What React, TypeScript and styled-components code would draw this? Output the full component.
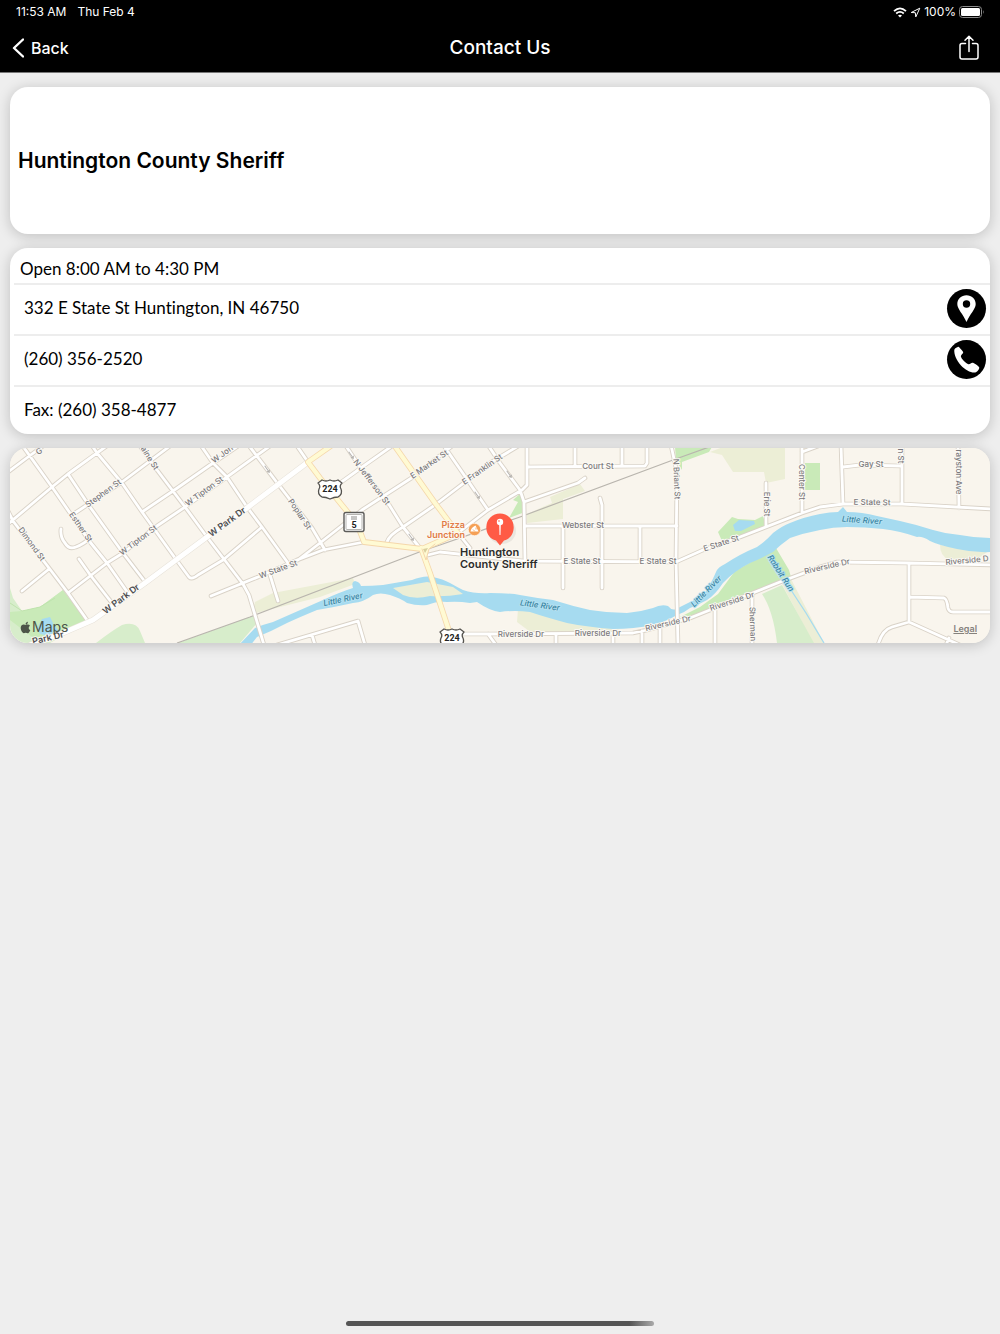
import React from "react";
import styled, { createGlobalStyle } from "styled-components";
import { FaApple } from "react-icons/fa";

const GlobalStyle = createGlobalStyle`
  * { box-sizing: border-box; }
  body {
    margin: 0;
    background: #eeeeee;
    color: #000;
    font-family: Inter, "Liberation Sans", sans-serif;
  }
`;

const Screen = styled.div`
  display: flex;
  flex-direction: column;
  min-height: 100vh;
`;

const Header = styled.header`
  background: #000;
  color: #fff;
  border-bottom: 1px solid #777;
`;

const StatusBar = styled.div`
  display: flex;
  align-items: center;
  height: 24px;
  padding: 0 15px 0 16px;
  font-size: 12px;
  font-weight: 400;
  line-height: 16px;
`;

const StatusDate = styled.span`
  margin-left: 11px;
`;

const StatusIcons = styled.div`
  display: flex;
  align-items: center;
  gap: 3px;
  margin-left: auto;
`;

const NavBar = styled.nav`
  display: grid;
  grid-template-columns: 1fr auto 1fr;
  align-items: center;
  height: 48px;
  padding: 0 12px;
`;

const BarButton = styled.button<{ $end?: boolean }>`
  display: flex;
  align-items: center;
  gap: 7px;
  justify-self: ${(p) => (p.$end ? "end" : "start")};
  padding: ${(p) => (p.$end ? "0 8px" : "0")};
  border: 0;
  background: none;
  color: inherit;
  font: 500 16px/24px Inter, sans-serif;
  cursor: pointer;
`;

const Title = styled.h1`
  margin: 0;
  font-size: 19px;
  font-weight: 500;
  line-height: 24px;
`;

const Content = styled.main`
  display: flex;
  flex-direction: column;
  gap: 14px;
  padding: 14px 10px;
`;

const Card = styled.section`
  position: relative;
  overflow: hidden;
  border-radius: 18px;
  background: #fff;
  box-shadow: 0 2px 14px rgba(0, 0, 0, 0.2);
`;

const NameCard = styled(Card)`
  display: flex;
  align-items: center;
  min-height: 147px;
  padding: 8px;
`;

const Name = styled.h2`
  margin: 0;
  font-size: 21px;
  font-weight: 600;
  line-height: 28px;
`;

const Details = styled(Card)`
  padding-left: 4px;
  font-family: Lato, "Open Sans", sans-serif;
  font-size: 17px;
  font-variant-ligatures: none;
  line-height: 24px;
`;

const Hours = styled.div`
  padding: 9px 6px 2px;
  border-bottom: 2px solid #ededed;
`;

const Row = styled.div`
  display: flex;
  align-items: center;
  justify-content: space-between;
  min-height: 51px;
  padding: 0 4px 3px 10px;
  border-bottom: 2px solid #ededed;

  &:last-child {
    min-height: 47px;
    padding-bottom: 2px;
    border-bottom: 0;
  }
`;

const RoundButton = styled.button`
  display: flex;
  padding: 0;
  border: 0;
  border-radius: 50%;
  background: #000;
  cursor: pointer;
`;

const MapCard = styled(Card)`
  height: 195px;
  background: #f9f5ed;
`;

const MapDrawing = styled.svg`
  display: block;
  width: 100%;
  height: 100%;
  font-family: Inter, sans-serif;
`;

const MapsBrand = styled.div`
  position: absolute;
  left: 9px;
  bottom: 6px;
  display: flex;
  align-items: center;
  color: #4c5548;
  font-size: 14px;
  line-height: 20px;
`;

const LegalLink = styled.a`
  position: absolute;
  right: 13px;
  bottom: 8px;
  color: #85827d;
  font-size: 9px;
  font-weight: 600;
  line-height: 12px;
  text-decoration: underline;
`;

const HomeIndicator = styled.div`
  align-self: center;
  width: 308px;
  height: 5px;
  margin: auto 0 8px;
  border-radius: 3px;
  background: linear-gradient(90deg, #555 92%, #aaa);
`;

const parks = [
  { fill: "#d7edcb", d: "M10 588 13 598 22 611 40 607 63 590 87 622 50 643H10Z" },
  { fill: "#c9eab8", d: "M22 611 40 607 63 590 87 622 60 635 40 643 10 620V612Z" },
  { fill: "#d7edcb", d: "M96 643Q113 630 122 625 136 621 140 631L145 643Z" },
  { fill: "#d7edcb", d: "M178 643 255 615 258 622 240 643Z" },
  { fill: "#eceed6", d: "M255 602 273 593 353 578 355 584 320 597 252 614Z" },
  { fill: "#c9eab8", d: "M509 518 518 502 513 500 522 492 525 512Z" },
  { fill: "#eceed6", d: "M550 497 580 484 585 491 563 499V519L527 523V514L552 503Z" },
  { fill: "#eceed6", d: "M518 609 560 618 620 630 600 634H533L517 622Z" },
  { fill: "#c9eab8", d: "M675 447H712L709 452 682 462V470L676 460Z" },
  { fill: "#eceed6", d: "M710 452 723 447H785V479L766 483 764 472H733L722 455Z" },
  { fill: "#c9eab8", d: "M805 463H820V490H805Z" },
  { fill: "#c9eab8", d: "M718 532 732 517 738 519 755 520 763 516 766 527 722 541Z" },
  { fill: "#c9eab8", d: "M680 617 700 607 718 594 735 571 776 548 789 570 791 577 745 599 690 618Z" },
  { fill: "#eceed6", d: "M782 584 791 579 824 643H813Z" },
  { fill: "#d7edcb", d: "M762 594 782 585 814 643H777Q773 610 762 594Z" },
  { fill: "#eceed6", d: "M940 545 990 550 976 560H949Q940 556 940 545Z" },
];

const river =
  "M238 646 255 628Q265 624 273 622L323 600Q340 592 353 588 351 582 355 581 360 582 361 586 372 586 383 585L412 580Q424 575 433 577 443 579 450 583 457 587 463 590 475 594 490 593 510 593 520 595 536 598 553 600 572 606 590 610 608 613 627 613 640 612 653 608 661 604 668 606 672 611 676 609L690 602Q698 599 704 594 710 586 716 572 718 567 725 564 740 554 757 547 766 541 773 533 782 526 790 523 804 517 820 514 830 512 838 512L843 507 847 512Q862 512 877 516L900 521Q918 525 933 530 946 534 960 535 975 538 992 538V552Q975 553 957 549 938 545 930 541 922 536 917 537 900 531 883 529 865 527 847 527 833 527 820 530 804 533 790 538 780 545 773 552 760 559 750 563 734 571 723 583 715 595 707 600 698 605 690 608 684 613 677 615 665 622 653 625 634 629 613 629 588 627 567 623 545 617 530 612 515 610 500 612 490 611 477 602L470 603Q458 601 447 602 437 601 427 605 417 606 407 603 400 598 390 595 380 592 373 595 364 602 353 603 335 607 317 610 300 617 287 623 272 631 257 637L250 646Z";

const minorRoads = [
  "M8 472 28 457 50 441",
  "M8 524 52 487 68 474 97 453 115 440",
  "M22 445 52 487 90 542 107 563 128 593",
  "M68 474 90 507 123 553 146 583",
  "M91 444 97 453 122 483 142 512 175 558 189 577Q192 580 198 575L223 560 262 527",
  "M75 513 122 482 170 446",
  "M140 446 157 470 185 507 207 537 243 584 249 595 264 645",
  "M142 512 173 491 213 463 247 440",
  "M68 593 107 563 123 553 154 528 185 507 227 477 270 446",
  "M202 447 213 463 227 477 247 507 262 527 288 563",
  "M8 511 13 521 49 568 68 593 87 620",
  "M22 591 49 569",
  "M61 529Q60 537 65 543 69 550 76 547 84 544 90 538",
  "M79 559 91 576 112 603",
  "M211 596 258 577 297 560 323 550 364 542",
  "M250 447 278 484 312 528 325 550",
  "M297 446 308 462",
  "M298 560 320 543 362 510 413 477 452 446",
  "M340 483 365 465 392 446",
  "M346 446 360 467 388 503 403 527 420 548",
  "M387 542Q389 535 403 527L435 505 490 463 520 445",
  "M444 446 462 472 488 510",
  "M458 533 488 510 522 490 527 485V445",
  "M458 533 470 548",
  "M428 555 440 552 523 561 676 562 703 550 740 537 802 513 820 507 843 504 902 504 992 509",
  "M488 445 500 463 520 490 524 502 525 561",
  "M524 502 578 483 585 478",
  "M527 467 645 466 647 463V445",
  "M575 445V466",
  "M622 445V466",
  "M525 526H677",
  "M563 526V588",
  "M600 498 602 505V588",
  "M640 526V561",
  "M671 445 677 473 676 560 678 645",
  "M460 634H490L633 633 647 630 690 618 740 598 780 582 820 567 837 562 909 563 992 565",
  "M488 634 496 645",
  "M556 634V645",
  "M613 634V645",
  "M642 631V645",
  "M660 628V645",
  "M715 609V645",
  "M752 595V645",
  "M766 483V527",
  "M802 445V513",
  "M802 452 818 446",
  "M841 445 843 504",
  "M843 467 860 465 902 466",
  "M902 445V504",
  "M958 445 959 508",
  "M909 563V622L892 627Q882 630 878 645",
  "M909 622 960 645",
  "M946 645 949 638",
  "M909 597 944 598Q947 599 948 608 949 612 953 612H992",
  "M270 575 278 601",
  "M277 645 358 621 365 645",
  "M312 635 315 645",
];

const highways = [
  "M335 443 308 462 320 478 350 515 358 526 364 542 422 549 458 533",
  "M394 445 435 503 453 527 458 533",
  "M421 548 430 573 452 640",
];

type LabelSpec = [string, number, number, number?];

const streetLabels: LabelSpec[] = [
  ["Stephen St", 103, 493, -36],
  ["Esther St", 81, 527, 55],
  ["Dimond St", 32, 544, 54],
  ["W Tipton St", 138, 540, -37],
  ["W Tipton St", 204, 491, -36],
  ["aine St", 150, 458, 58],
  ["W Jon", 222, 454, -36],
  ["G", 39, 451, -36],
  ["W State St", 278, 569, -20],
  ["Poplar St", 300, 514, 56],
  ["N Jefferson St", 372, 482, 53],
  ["E Market St", 429, 464, -35],
  ["E Franklin St", 482, 469, -35],
  ["Court St", 598, 466],
  ["Webster St", 583, 525],
  ["E State St", 582, 561],
  ["E State St", 658, 561],
  ["N Briant St", 677, 479, 88],
  ["E State St", 721, 543, -18],
  ["Erie St", 767, 504, 90],
  ["Center St", 802, 482, 90],
  ["Gay St", 871, 464],
  ["E State St", 872, 502, 1],
  ["n St", 901, 456, 90],
  ["rayston Ave", 959, 472, 90],
  ["Riverside Dr", 827, 566, -13],
  ["Riverside D", 967, 560, -5],
  ["Riverside Dr", 732, 601, -18],
  ["Riverside Dr", 668, 623, -13],
  ["Riverside Dr", 521, 634],
  ["Riverside Dr", 598, 633],
  ["Sherman", 753, 624, 88],
];

const majorLabels: LabelSpec[] = [
  ["W Park Dr", 227, 522, -36],
  ["W Park Dr", 121, 599, -37],
  ["Park Dr", 48, 638, -13],
];

const waterLabels: LabelSpec[] = [
  ["Little River", 343, 599, -12],
  ["Little River", 540, 605, 8],
  ["Little River", 706, 591, -46],
  ["Little River", 862, 520, 4],
  ["Rabbit Run", 781, 573, 57],
];

const oneWayMarks = [
  [267, 469],
  [351, 455],
  [411, 537],
  [477, 495],
  [509, 474],
];

const MapText = styled.text<{ $kind: "street" | "major" | "water" }>`
  font-size: ${(p) => (p.$kind === "major" ? 9 : 8)}px;
  font-weight: ${(p) => (p.$kind === "major" ? 600 : 500)};
  font-style: ${(p) => (p.$kind === "water" ? "italic" : "normal")};
  fill: ${(p) => ({ street: "#7b7a7d", major: "#4d4d50", water: "#35829f" })[p.$kind]};
  stroke: ${(p) => (p.$kind === "water" ? "#b5e1f1" : "#fbf9f4")};
  stroke-width: 2px;
  paint-order: stroke;
  stroke-linejoin: round;
  text-anchor: middle;
`;

const PlaceText = styled.text<{ $food?: boolean }>`
  font-size: ${(p) => (p.$food ? 9 : 11)}px;
  font-weight: 600;
  fill: ${(p) => (p.$food ? "#e27b45" : "#2b2b2b")};
  stroke: #fbf8f1;
  stroke-width: 2px;
  paint-order: stroke;
  text-anchor: ${(p) => (p.$food ? "end" : "start")};
`;

const ShieldText = styled.text`
  font: 700 9px "Roboto", sans-serif;
  fill: #222;
  text-anchor: middle;
`;

function Labels({ items, kind }: { items: LabelSpec[]; kind: "street" | "major" | "water" }) {
  return (
    <g>
      {items.map(([text, x, y, angle = 0], i) => (
        <MapText key={i} $kind={kind} transform={`translate(${x} ${y}) rotate(${angle})`} y={3}>
          {text}
        </MapText>
      ))}
    </g>
  );
}

function Shield({ x, y }: { x: number; y: number }) {
  return (
    <g transform={`translate(${x} ${y})`}>
      <path
        d="M-8-9Q-4-7 0-9 4-7 8-9L12-6Q9-3 11 0 13 5 8 8 4 8 0 10-4 8-8 8-13 5-11 0-9-3-12-6Z"
        fill="#fff"
        stroke="#55534f"
        strokeWidth="1.3"
        strokeLinejoin="round"
      />
      <ShieldText y={3}>224</ShieldText>
    </g>
  );
}

function AreaMap() {
  return (
    <MapDrawing viewBox="10 448 980 195" preserveAspectRatio="xMidYMid slice" role="img" aria-label="Map">
      <rect x="10" y="448" width="980" height="195" fill="#f9f5ed" />
      {parks.map((p, i) => (
        <path key={i} fill={p.fill} d={p.d} />
      ))}
      <path d="M10 603 22 611 40 607 55 598" fill="none" stroke="#bfe3ad" />
      <path d="M37 628 42 619 50 617 54 625 60 632 50 636 40 634Z" fill="#a6dbf0" />
      <path d={river} fill="#a6dbf0" />
      <path d="M393 588 427 582 453 587 463 594Q445 597 430 596 415 600 403 595Z" fill="#eceed6" />
      <path d="M733 525 739 520 754 521 755 524 741 531H735Z" fill="#a6dbf0" />
      <path d="M791 590 806 613 824 643" fill="none" stroke="#a6dbf0" strokeWidth="1.3" />
      <path d="M177 643 250 617 422 551 440 545 520 517 673 460 712 446" fill="none" stroke="#b9b5ae" strokeWidth="1.2" />
      <g fill="none" strokeLinecap="round" strokeLinejoin="round">
        <path d={minorRoads.join("")} stroke="#d9d2c7" strokeWidth="4.6" />
        <path d={minorRoads.join("")} stroke="#fff" strokeWidth="2.8" />
        <path d="M30 645 63 633 93 620 145 583 207 537 247 508 308 462" stroke="#e8e3da" strokeWidth="6" />
        <path d="M30 645 63 633 93 620 145 583 207 537 247 508 308 462" stroke="#fff" strokeWidth="5" />
        <path d={highways.join("")} stroke="#f5d7ab" strokeWidth="5.8" />
        <path d={highways.join("")} stroke="#fffad3" strokeWidth="4.2" />
        <path d="M422 549 426 560 429 549 435 544" stroke="#f5d7ab" strokeWidth="1" fill="#fffad3" />
        <path d="M423 549 428 548 425 553Z" fill="#d9cf9f" />
      </g>
      {oneWayMarks.map(([x, y], i) => (
        <path
          key={i}
          transform={`translate(${x} ${y}) rotate(55)`}
          d="M-4 0H4M2-1.500 4 0 2 1.500"
          fill="none"
          stroke="#b5b2ae"
        />
      ))}
      <Labels items={streetLabels} kind="street" />
      <Labels items={majorLabels} kind="major" />
      <Labels items={waterLabels} kind="water" />
      <Shield x={330} y={489} />
      <Shield x={452} y={638} />
      <rect x="344" y="512.5" width="20" height="19" rx="2" fill="#fff" stroke="#5c5b59" strokeWidth="1.4" />
      <rect x="346" y="514.5" width="16" height="15" rx="1" fill="none" stroke="#b5b4b1" />
      <path d="M351 517H357M351 519H357" stroke="#8c8b89" />
      <ShieldText x={354} y={528}>5</ShieldText>
      <PlaceText $food x={465} y={528}>Pizza</PlaceText>
      <PlaceText $food x={465} y={538}>Junction</PlaceText>
      <circle cx="474.500" cy="529.500" r="6.200" fill="#f5a055" stroke="#fff" strokeWidth=".6" />
      <path d="M470.500 531.500Q471 527.500 475.500 525.500L478.500 531.500Z" fill="#fff" />
      <path d="M473 529.500 475 531.500M476 527.500V529.500" stroke="#f5a055" strokeWidth=".8" />
      <ellipse cx="502" cy="531" rx="14" ry="13" fill="#000" opacity=".06" />
      <path
        d="M500 545.500 496 540.500C490 539 486.300 534 486.300 527.300A13.700 13.700 0 1 1 513.700 527.300C513.700 534 510 539 504 540.500Z"
        fill="#ff5b45"
      />
      <circle cx="500" cy="522" r="3.200" fill="#fff" />
      <circle cx="499" cy="521" r="1" fill="#ff9c8d" />
      <path d="M499.200 525H500.800L500.500 535H499.500Z" fill="#fff" />
      <PlaceText x={460} y={556}>Huntington</PlaceText>
      <PlaceText x={460} y={568}>County Sheriff</PlaceText>
    </MapDrawing>
  );
}

function WifiIcon() {
  return (
    <svg width="14" height="11" viewBox="0 0 14 11" fill="none" stroke="#fff" strokeWidth="1.8" aria-hidden="true">
      <path d="M1 4.200Q7-1.500 13 4.200M3.200 6.500Q7 3.200 10.800 6.500" />
      <path d="M7 10.500 5 8.400Q7 6.900 9 8.400Z" fill="#fff" stroke="none" />
    </svg>
  );
}

function LocationIcon() {
  return (
    <svg width="11" height="11" viewBox="0 0 11 11" fill="none" stroke="#fff" strokeLinejoin="round" aria-hidden="true">
      <path d="M1.200 5.500 9.800 1.200 5.800 9.900 5.300 5.700Z" />
    </svg>
  );
}

function BatteryIcon() {
  return (
    <svg width="26" height="12" viewBox="0 0 26 12" aria-hidden="true">
      <rect x=".5" y=".5" width="22" height="11" rx="3" fill="none" stroke="#8b8b8b" />
      <rect x="2" y="2" width="19" height="8" rx="1.500" fill="#fff" />
      <path d="M24 4Q25.500 6 24 8Z" fill="#8b8b8b" />
    </svg>
  );
}

export default function App() {
  return (
    <>
      <GlobalStyle />
      <Screen>
        <Header>
          <StatusBar>
            <span>11:53 AM</span>
            <StatusDate>Thu Feb 4</StatusDate>
            <StatusIcons>
              <WifiIcon />
              <LocationIcon />
              <span>100%</span>
              <BatteryIcon />
            </StatusIcons>
          </StatusBar>
          <NavBar>
            <BarButton type="button">
              <svg width="12" height="20" viewBox="0 0 12 20" fill="none" stroke="#fff" strokeWidth="2.400" aria-hidden="true">
                <path d="M11 1.500 2 10 11 18.500" strokeLinecap="round" strokeLinejoin="round" />
              </svg>
              Back
            </BarButton>
            <Title>Contact Us</Title>
            <BarButton type="button" $end aria-label="Share">
              <svg width="22" height="26" viewBox="0 0 22 26" fill="none" stroke="#fff" strokeWidth="1.500" strokeLinecap="round" strokeLinejoin="round" aria-hidden="true">
                <path d="M7.500 8.500H4Q2 8.500 2 10.500V22Q2 24 4 24H18Q20 24 20 22V10.500Q20 8.500 18 8.500H14.500M11 16.500V1.500M7 5.300 11 1.300 15 5.300" />
              </svg>
            </BarButton>
          </NavBar>
        </Header>
        <Content>
          <NameCard>
            <Name>Huntington County Sheriff</Name>
          </NameCard>
          <Details>
            <Hours>Open 8:00 AM to 4:30 PM</Hours>
            <Row>
              <span>332 E State St Huntington, IN 46750</span>
              <RoundButton type="button" aria-label="Directions">
                <svg width="39" height="39" viewBox="0 0 39 39" aria-hidden="true">
                  <path fill="#fff" fillRule="evenodd" d="M19.500 6.200C14.300 6.200 10.300 10 10.300 15 10.300 20 16 25 19.500 33 23 25 28.700 20 28.700 15 28.700 10 24.700 6.200 19.500 6.200ZM19.500 11.300A3.700 3.700 0 1 1 19.500 18.700 3.700 3.700 0 0 1 19.500 11.300Z" />
                </svg>
              </RoundButton>
            </Row>
            <Row>
              <span>(260) 356-2520</span>
              <RoundButton type="button" aria-label="Call">
                <svg width="39" height="39" viewBox="0 0 39 39" aria-hidden="true">
                  <path fill="#fff" d="M7.300 9.800C7.500 8.400 9.500 7.200 10.800 6.900 11.800 6.700 12.500 7.500 16 11.800 17 13.200 13.800 14.800 13.900 16.500 14.500 19 18.800 23.300 21.500 24.200 23.200 24.500 24.200 22.300 26 22.800 27.500 23.300 30.800 25.800 32 27 33 28.200 30.800 31.300 29 32.200 25.500 33.600 18.500 30.500 14 25.500 9.500 20.500 6.900 14.500 7.300 9.800Z" />
                </svg>
              </RoundButton>
            </Row>
            <Row>
              <span>Fax: (260) 358-4877</span>
            </Row>
          </Details>
          <MapCard>
            <AreaMap />
            <MapsBrand>
              <FaApple size={13} aria-hidden="true" />
              Maps
            </MapsBrand>
            <LegalLink href="#legal">Legal</LegalLink>
          </MapCard>
        </Content>
        <HomeIndicator />
      </Screen>
    </>
  );
}
